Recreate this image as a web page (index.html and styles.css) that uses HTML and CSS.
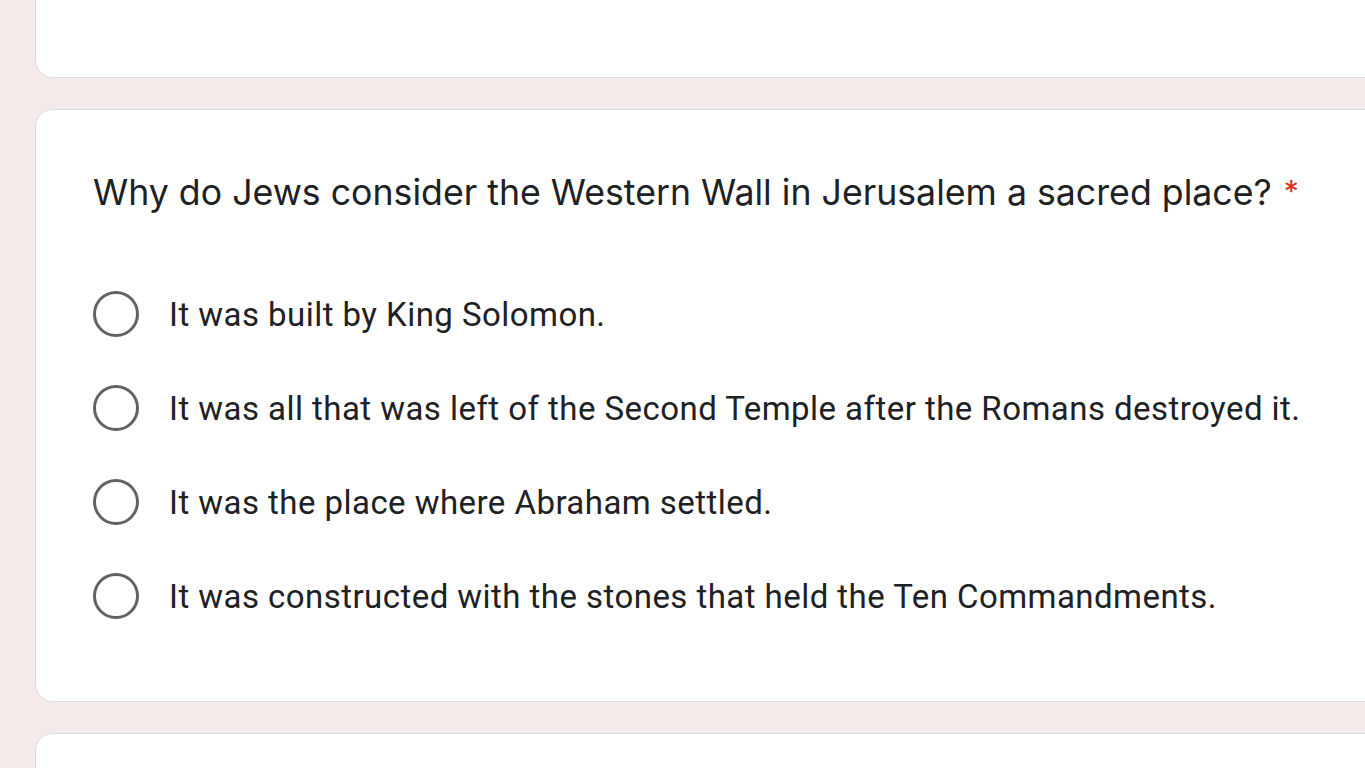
FILE: index.html
```html
<!DOCTYPE html>
<html>
<head>
<meta charset="utf-8">
<link rel="stylesheet" href="styles.css">
</head>
<body>
<div class="page">
  <div class="card card-top"></div>
  <div class="card card-question">
    <div class="title">Why do Jews consider the Western Wall in Jerusalem a sacred place?<span class="req">*</span></div>
    <div class="options">
      <label class="option"><span class="radio"></span><span class="opt-text">It was built by King Solomon.</span></label>
      <label class="option"><span class="radio"></span><span class="opt-text">It was all that was left of the Second Temple after the Romans destroyed it.</span></label>
      <label class="option"><span class="radio"></span><span class="opt-text">It was the place where Abraham settled.</span></label>
      <label class="option"><span class="radio"></span><span class="opt-text">It was constructed with the stones that held the Ten Commandments.</span></label>
    </div>
  </div>
  <div class="card card-bottom"></div>
</div>
</body>
</html>
```

FILE: styles.css
```css
html, body {
  margin: 0;
  padding: 0;
  height: 768px;
  overflow: hidden;
  background: #f4eaea;
}
.page {
  display: flex;
  flex-direction: column;
  gap: 31px;
  padding-left: 35px;
  margin-top: -40px;
}
.card {
  box-sizing: border-box;
  width: 1400px;
  background: #fff;
  border: 1.5px solid #dadce0;
  border-radius: 18px;
}
.card-top {
  height: 118px;
}
.card-bottom {
  height: 120px;
}
.card-question {
  height: 593px;
  padding: 57px 0 0 57px;
}
.title {
  font-family: Inter, sans-serif;
  font-size: 35.7px;
  line-height: 48px;
  color: #202124;
  letter-spacing: 0;
}
.req {
  color: #d93025;
  margin-left: 12px;
  font-size: 30px;
  vertical-align: 3px;
}
.options {
  display: flex;
  flex-direction: column;
  margin-top: 51px;
}
.option {
  display: flex;
  align-items: center;
  height: 94px;
}
.radio {
  box-sizing: border-box;
  width: 46px;
  height: 46px;
  border: 3.5px solid #5f6368;
  border-radius: 50%;
  flex: none;
}
.opt-text {
  margin-left: 30px;
  font-family: Roboto, sans-serif;
  font-size: 33px;
  letter-spacing: 0.45px;
  color: #202124;
}
```
